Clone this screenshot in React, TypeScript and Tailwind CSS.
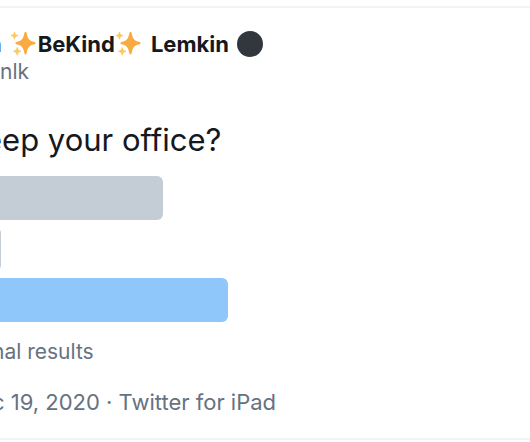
type PollOption = {
    id: string;
    barClass: string;
};

const options: PollOption[] = [
    { id: "first", barClass: "w-[171px] bg-[#c4cdd5]" },
    { id: "second", barClass: "w-[9px] bg-[#c4cdd5]" },
    { id: "third", barClass: "w-[236px] bg-[#8fc7fa]" },
];

const Sparkles = () => {
    return (
        <svg viewBox="0 0 26 26" className="mr-0.5 size-[26px] shrink-0" aria-hidden="true">
            <path
                d="M15.5 0.8C16.1 0.8 16.4 1.2 16.6 2C17.8 8 19.3 9.8 24.5 11C25.3 11.2 25.7 11.5 25.7 12.1C25.7 12.7 25.3 13 24.5 13.2C19.3 14.4 17.8 16.2 16.6 22.2C16.4 23 16.1 23.4 15.5 23.4C14.9 23.4 14.6 23 14.4 22.2C13.2 16.2 11.7 14.4 6.5 13.2C5.7 13 5.3 12.7 5.3 12.1C5.3 11.5 5.7 11.2 6.5 11C11.7 9.8 13.2 8 14.4 2C14.6 1.2 14.9 0.8 15.5 0.8Z"
                fill="#f9ab42"
            />
            <path
                d="M4.5 1C5.1 3.4 5.7 4 8 4.6C5.7 5.2 5.1 5.8 4.5 8.2C3.9 5.8 3.3 5.2 1 4.6C3.3 4 3.9 3.4 4.5 1Z"
                fill="#fcc75b"
                stroke="#fcc75b"
                strokeWidth="0.8"
                strokeLinejoin="round"
            />
            <path
                d="M7.2 16.4C7.8 19 8.5 19.7 11 20.3C8.5 20.9 7.8 21.6 7.2 24.2C6.6 21.6 5.9 20.9 3.4 20.3C5.9 19.7 6.6 19 7.2 16.4Z"
                fill="#fcc75b"
                stroke="#fcc75b"
                strokeWidth="0.8"
                strokeLinejoin="round"
            />
        </svg>
    );
};

const PollResults = () => {
    return (
        <ul className="-ml-2 mt-4 space-y-[7px]">
            {options.map((option) => (
                <li key={option.id} className="flex h-11">
                    <span className={`rounded-r-md ${option.barClass}`} />
                </li>
            ))}
        </ul>
    );
};

export default function App() {
    return (
        <article className="mt-[6px] overflow-hidden border-y-2 border-[#f2f3f4] bg-white pt-[22px] pb-[22px] font-['Inter',sans-serif] text-[22px] leading-7 whitespace-nowrap text-[#66727f]">
            <header>
                <h1 className="-ml-3 flex items-center font-bold text-[#15181c]">
                    <span>n</span>
                    <span className="ml-2 flex items-center">
                        <Sparkles />
                        BeKind
                        <Sparkles />
                    </span>
                    <span className="ml-2">Lemkin</span>
                    <svg viewBox="0 0 26 26" className="ml-2 size-[26px] shrink-0" aria-hidden="true">
                        <circle cx="13" cy="13" r="13" fill="#31373d" />
                    </svg>
                </h1>
                <p className="text-[21px]">nlk</p>
            </header>

            <p className="-ml-4 mt-[34px] text-[31px] leading-10 text-[#15181c]">eep your office?</p>

            <PollResults />

            <p className="-ml-2 mt-4 text-[21px]">nal results</p>
            <p className="-ml-2 mt-[22px]">c 19, 2020 · Twitter for iPad</p>
        </article>
    );
}
